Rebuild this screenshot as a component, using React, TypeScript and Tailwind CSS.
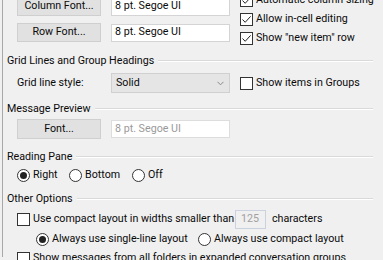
import React from "react";

function Check({ checked = false }: { checked?: boolean }) {
  return (
    <span className="flex h-[13px] w-[13px] shrink-0 items-center justify-center border border-[#333333] bg-white">
      {checked && (
        <svg width="11" height="11" viewBox="0 0 11 11">
          <path d="M1.5 5.5 L4.2 8.3 L9.6 2.4" fill="none" stroke="#222" strokeWidth="1" />
        </svg>
      )}
    </span>
  );
}

function Radio({ checked = false }: { checked?: boolean }) {
  return (
    <span className="flex h-[13px] w-[13px] shrink-0 items-center justify-center rounded-full border border-[#333333] bg-white">
      {checked && <span className="h-[7px] w-[7px] rounded-full bg-[#222222]" />}
    </span>
  );
}

function CheckRow({ label, checked }: { label: string; checked?: boolean }) {
  return (
    <div className="flex h-[19px] items-center gap-[3px] whitespace-nowrap">
      <Check checked={checked} />
      <span>{label}</span>
    </div>
  );
}

function Heading({ title, className = "" }: { title: string; className?: string }) {
  return (
    <div className={"flex h-[14px] items-center pr-[10px] " + className}>
      <span className="whitespace-nowrap">{title}</span>
      <div className="ml-[4px] flex-1 border-t border-b border-t-[#d9d9d9] border-b-white" />
    </div>
  );
}

function Btn({ label }: { label: string }) {
  return (
    <div className="flex h-[19px] w-[84px] shrink-0 items-center justify-center border border-[#cfcfcf] bg-[#e1e1e1]">
      {label}
    </div>
  );
}

function TextBox({ value, disabled }: { value: string; disabled?: boolean }) {
  return (
    <div
      className={
        "flex h-[18px] w-[119px] shrink-0 items-center border bg-white pl-[3px] " +
        (disabled ? "border-[#dddddd] text-[#9a9a9a]" : "border-[#d4d4d4]")
      }
    >
      {value}
    </div>
  );
}

export default function App() {
  return (
    <div
      className="h-[260px] w-[383px] overflow-hidden bg-[#f0f0f0] text-[10.7px] leading-none text-[#0a0a0a]"
      style={{ fontFamily: 'Roboto, "Segoe UI", sans-serif' }}
    >
      <div className="ml-[2px] h-full border-l border-[#a8a8a8] pl-[4px]">
        {/* fonts + column options */}
        <div className="-mt-[3px] flex h-[45px] items-start pl-[10px]">
          <div className="flex flex-col gap-[7px]">
            <div className="flex items-center gap-[10px]">
              <Btn label="Column Font..." />
              <TextBox value="8 pt. Segoe UI" />
            </div>
            <div className="flex items-center gap-[10px]">
              <Btn label="Row Font..." />
              <TextBox value="8 pt. Segoe UI" />
            </div>
          </div>
          <div className="-mt-[6px] ml-[10px] flex flex-col">
            <CheckRow label="Automatic column sizing" checked />
            <CheckRow label="Allow in-cell editing" checked />
            <CheckRow label={'Show "new item" row'} checked />
          </div>
        </div>

        <Heading title="Grid Lines and Group Headings" className="mt-[12px]" />
        <div className="mt-[5px] flex h-[20px] items-center pl-[10px]">
          <span className="w-[94px]">Grid line style:</span>
          <div className="flex h-[20px] w-[119px] items-center justify-between border border-[#d0d0d0] bg-[#e5e5e5] pl-[4px] pr-[5px]">
            <span>Solid</span>
            <svg width="7" height="5" viewBox="0 0 7 5">
              <path d="M0.5 0.8 L3.5 3.8 L6.5 0.8" fill="none" stroke="#8a8a8a" strokeWidth="1" />
            </svg>
          </div>
          <div className="ml-[10px]">
            <CheckRow label="Show items in Groups" />
          </div>
        </div>

        <Heading title="Message Preview" className="mt-[9px]" />
        <div className="mt-[3px] flex h-[20px] items-center gap-[10px] pl-[10px]">
          <div className="flex h-[20px] w-[84px] items-center justify-center border border-[#cfcfcf] bg-[#e1e1e1]">
            Font...
          </div>
          <TextBox value="8 pt. Segoe UI" disabled />
        </div>

        <Heading title="Reading Pane" className="mt-[11px]" />
        <div className="mt-[4px] flex h-[14px] items-center pl-[10px]">
          <div className="flex w-[52px] items-center gap-[3px]">
            <Radio checked />
            <span>Right</span>
          </div>
          <div className="flex w-[63px] items-center gap-[3px]">
            <Radio />
            <span>Bottom</span>
          </div>
          <div className="flex items-center gap-[3px]">
            <Radio />
            <span>Off</span>
          </div>
        </div>

        <Heading title="Other Options" className="mt-[10px]" />
        <div className="mt-[4px] flex h-[19px] items-center pl-[10px] whitespace-nowrap">
          <div className="flex w-[218px] items-center gap-[3px]">
            <Check />
            <span>Use compact layout in widths smaller than</span>
          </div>
          <div className="flex h-[19px] w-[31px] items-center border border-[#c9d2de] bg-[#f0f0f0] pl-[5px] text-[#a0a0a0]">
            125
          </div>
          <span className="ml-[6px]">characters</span>
        </div>
        <div className="mt-[3px] flex h-[14px] items-center pl-[29px] whitespace-nowrap">
          <div className="flex w-[162px] items-center gap-[3px]">
            <Radio checked />
            <span>Always use single-line layout</span>
          </div>
          <div className="flex items-center gap-[3px]">
            <Radio />
            <span>Always use compact layout</span>
          </div>
        </div>
        <div className="mt-[6px] flex items-center gap-[3px] pl-[10px] whitespace-nowrap">
          <Check />
          <span>Show messages from all folders in expanded conversation groups</span>
        </div>
      </div>
    </div>
  );
}
